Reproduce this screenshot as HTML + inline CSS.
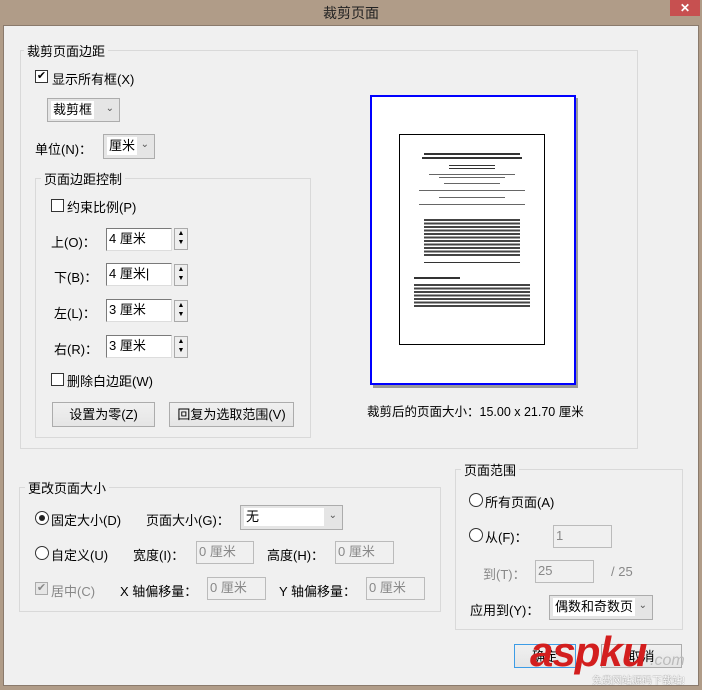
<!DOCTYPE html>
<html><head><meta charset="utf-8"><style>
*{box-sizing:border-box;margin:0;padding:0}
body{width:702px;height:690px;background:#b09c88;position:relative;overflow:hidden;font-family:"Liberation Sans","Noto Sans CJK SC",sans-serif;font-size:13px;color:#000}
.a{position:absolute;white-space:nowrap}
.client{position:absolute;left:3px;top:25px;width:696px;height:661px;background:#f0f0f0;border:1px solid #8a7a6c}
.grp{position:absolute;border:1px solid #d9d9d9}
.gl{position:absolute;background:#f0f0f0;padding:0 3px;top:-10px;left:5px}
.cb{position:absolute;width:13px;height:13px;border:1px solid #333;background:#fff}
.rd{position:absolute;width:14px;height:14px;border:1px solid #333;border-radius:50%;background:#fff}
.sel{position:absolute;border:1px solid #acacac;background:#e5e5e5}
.sel span{position:absolute;left:3px;top:2px;background:#fff;padding:0 2px;height:18px;line-height:18px}
.sel i{position:absolute;right:5px;top:4px;font-style:normal;font-size:10px;color:#555}
.in{position:absolute;height:23px;background:#fff;border:1px solid #7a7a7a;border-right-color:#ddd;border-bottom-color:#ddd;padding-left:2px;line-height:20px}
.dis{position:absolute;height:23px;background:#f0f0f0;border:1px solid #bbb;padding-left:2px;line-height:20px;color:#888}
.sp{position:absolute;width:14px;height:22px;border:1px solid #aaa;background:#eee;font-size:7px;line-height:9px;text-align:center}
.btn{position:absolute;height:25px;border:1px solid #acacac;background:linear-gradient(#f0f0f0,#e5e5e5);text-align:center;line-height:23px}
.ln{height:2px;background:#333;margin:2px 0}
.gray{color:#888}
</style></head><body>
<div class="a" style="left:0;top:3px;width:702px;text-align:center;font-size:14px;color:#222">裁剪页面</div>
<div class="a" style="left:670px;top:0;width:30px;height:16px;background:#c75050;color:#fff;text-align:center;font-size:12px;line-height:16px;font-weight:bold">✕</div>
<div class="client"></div>

<div class="grp" style="left:20px;top:50px;width:618px;height:399px"><div class="gl" style="left:3px">裁剪页面边距</div></div>
<div class="cb" style="left:35px;top:70px;font-size:11px;line-height:11px;text-align:center">✔</div>
<div class="a" style="left:52px;top:69px">显示所有框(X)</div>
<div class="sel" style="left:47px;top:98px;width:73px;height:24px"><span>裁剪框</span><i>⌄</i></div>
<div class="a" style="left:35px;top:139px">单位(N)：</div>
<div class="sel" style="left:103px;top:134px;width:52px;height:25px"><span>厘米</span><i>⌄</i></div>

<div class="grp" style="left:35px;top:178px;width:276px;height:260px"><div class="gl" style="left:5px">页面边距控制</div></div>
<div class="cb" style="left:51px;top:199px"></div><div class="a" style="left:67px;top:197px">约束比例(P)</div>
<div class="a" style="left:51px;top:232px">上(O)：</div><div class="in" style="left:106px;top:228px;width:66px">4 厘米</div><div class="sp" style="left:174px;top:228px">▲<br>▼</div>
<div class="a" style="left:54px;top:267px">下(B)：</div><div class="in" style="left:106px;top:263px;width:66px">4 厘米|</div><div class="sp" style="left:174px;top:264px">▲<br>▼</div>
<div class="a" style="left:54px;top:303px">左(L)：</div><div class="in" style="left:106px;top:299px;width:66px">3 厘米</div><div class="sp" style="left:174px;top:300px">▲<br>▼</div>
<div class="a" style="left:54px;top:339px">右(R)：</div><div class="in" style="left:106px;top:335px;width:66px">3 厘米</div><div class="sp" style="left:174px;top:336px">▲<br>▼</div>
<div class="cb" style="left:51px;top:373px"></div><div class="a" style="left:67px;top:371px">删除白边距(W)</div>
<div class="btn" style="left:52px;top:402px;width:103px">设置为零(Z)</div>
<div class="btn" style="left:169px;top:402px;width:125px">回复为选取范围(V)</div>

<div class="a" style="left:373px;top:98px;width:205px;height:290px;background:#999"></div>
<div class="a" style="left:370px;top:95px;width:206px;height:290px;background:#fff;border:2px solid #00f"></div>
<div class="a" style="left:399px;top:134px;width:146px;height:211px;border:1px solid #000;background:#fff;padding:16px 14px 0 14px">
<div class="ln" style="margin:2px 10px"></div><div class="ln" style="margin:2px 8px 6px"></div>
<div class="ln" style="margin:2px 35px;height:1px"></div><div class="ln" style="margin:2px 35px 5px;height:1px"></div>
<div class="ln" style="margin:2px 15px;height:1px;background:#666"></div><div class="ln" style="margin:2px 25px 5px;height:1px;background:#666"></div>
<div class="ln" style="margin:2px 30px 6px;height:1px;background:#666"></div>
<div class="ln" style="margin:2px 5px 6px;height:1px;background:#666"></div>
<div class="ln" style="margin:2px 25px 6px;height:1px;background:#666"></div>
<div class="ln" style="margin:2px 5px 14px;height:1px;background:#666"></div>
<div style="height:38px;margin:0 10px;background:repeating-linear-gradient(#444 0 2px,#fff 2px 3.5px)"></div>
<div class="ln" style="margin:5px 10px 14px 10px;height:1px"></div>
<div class="ln" style="margin:2px 70px 5px 0;height:2px"></div>
<div style="height:24px;background:repeating-linear-gradient(#444 0 2px,#fff 2px 3.5px)"></div>
</div>
<div class="a" style="left:367px;top:401px;font-size:12.5px">裁剪后的页面大小：15.00 x 21.70 厘米</div>

<div class="grp" style="left:19px;top:487px;width:422px;height:125px"><div class="gl" style="left:5px">更改页面大小</div></div>
<div class="rd" style="left:35px;top:511px"><div style="width:6px;height:6px;background:#222;border-radius:50%;margin:3px"></div></div>
<div class="a" style="left:51px;top:510px">固定大小(D)</div>
<div class="a" style="left:146px;top:510px">页面大小(G)：</div>
<div class="sel" style="left:240px;top:505px;width:103px;height:25px"><span style="width:80px">无</span><i>⌄</i></div>
<div class="rd" style="left:35px;top:546px"></div><div class="a" style="left:51px;top:545px">自定义(U)</div>
<div class="a" style="left:133px;top:545px">宽度(I)：</div><div class="dis" style="left:196px;top:541px;width:58px">0 厘米</div>
<div class="a" style="left:267px;top:545px">高度(H)：</div><div class="dis" style="left:335px;top:541px;width:59px">0 厘米</div>
<div class="cb" style="left:35px;top:582px;border-color:#aaa;background:#e6e6e6;color:#888;font-size:11px;line-height:11px;text-align:center">✔</div>
<div class="a gray" style="left:51px;top:581px">居中(C)</div>
<div class="a" style="left:120px;top:581px">X 轴偏移量：</div><div class="dis" style="left:207px;top:577px;width:59px">0 厘米</div>
<div class="a" style="left:279px;top:581px">Y 轴偏移量：</div><div class="dis" style="left:366px;top:577px;width:59px">0 厘米</div>

<div class="grp" style="left:455px;top:469px;width:228px;height:161px"><div class="gl" style="left:5px">页面范围</div></div>
<div class="rd" style="left:469px;top:493px"></div><div class="a" style="left:485px;top:492px">所有页面(A)</div>
<div class="rd" style="left:469px;top:528px"></div><div class="a" style="left:485px;top:527px">从(F)：</div>
<div class="dis" style="left:553px;top:525px;width:59px;height:23px">1</div>
<div class="a gray" style="left:483px;top:564px">到(T)：</div>
<div class="dis" style="left:535px;top:560px;width:59px">25</div>
<div class="a gray" style="left:611px;top:564px">/ 25</div>
<div class="a" style="left:470px;top:600px">应用到(Y)：</div>
<div class="sel" style="left:549px;top:595px;width:104px;height:25px"><span>偶数和奇数页</span><i>⌄</i></div>

<div class="btn" style="left:514px;top:644px;width:62px;height:24px;border-color:#3c9ce6">确定</div>
<div class="btn" style="left:601px;top:644px;width:81px;height:24px">取消</div>
<div class="a" style="left:530px;top:628px;font-size:42px;font-weight:bold;font-style:italic;color:#d31e1e;letter-spacing:-1px">aspku</div>
<div class="a" style="left:650px;top:652px;font-size:16px;font-style:italic;color:#bbb">.com</div>
<div class="a" style="left:592px;top:672px;font-size:10px;color:#fff;text-shadow:0 0 1px #555">免费网站源码下载站!</div>
</body></html>
